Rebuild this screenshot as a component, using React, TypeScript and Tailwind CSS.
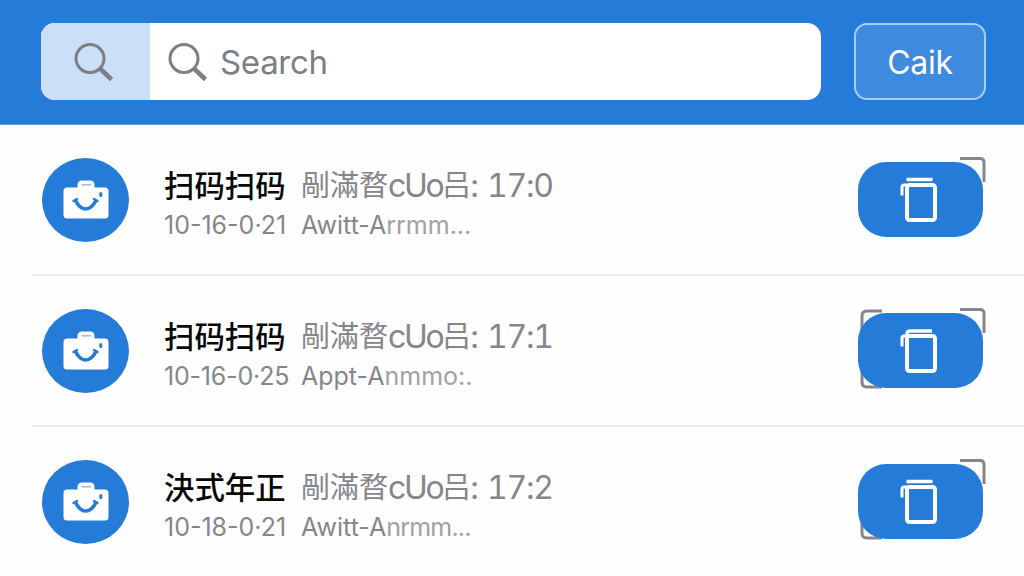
type Entry = {
  name: string;
  label: string;
  time: string;
  date: string;
  dateSpacing: string;
  note: string;
  noteTail: string;
  tailSpacing: string;
  topLeft: boolean;
  bottomLeft: boolean;
  joined: boolean;
};

const entries: Entry[] = [
  { name: '扫码扫码', label: '剮滿暓', time: '17:0', date: '10-16-0·21', dateSpacing: 'tracking-[0px]', note: 'Awitt-A', noteTail: 'rrmm...', tailSpacing: 'tracking-[0px]', topLeft: false, bottomLeft: false, joined: false },
  { name: '扫码扫码', label: '剮滿暓', time: '17:1', date: '10-16-0·25', dateSpacing: 'tracking-[-0.200px]', note: 'Appt-A', noteTail: 'nmmo:.', tailSpacing: 'tracking-[0px]', topLeft: true, bottomLeft: true, joined: true },
  { name: '決式年正', label: '剮滿暓', time: '17:2', date: '10-18-0·21', dateSpacing: 'tracking-[0px]', note: 'Awitt-A', noteTail: 'nrmm...', tailSpacing: 'tracking-[-0.800px]', topLeft: false, bottomLeft: true, joined: false },
];

function SearchIcon() {
  return (
    <svg className="h-10 w-10 shrink-0" viewBox="0 0 40 40" fill="none" stroke="#7c7f84">
      <circle cx="16" cy="16.500" r="14" strokeWidth="3" />
      <path d="M26 26.500 37.500 37.500" strokeWidth="4.500" />
    </svg>
  );
}

function CaseIcon() {
  return (
    <svg className="h-[40px] w-[46px]" viewBox="0 0 46 40">
      <path
        fill="#fff"
        d="M4 7.500h10.500V5q0-4.500 4.500-4.500h8Q31.500.500 31.500 5v2.500H42q3.500 0 3.500 3.500v24q0 3.500-3.500 3.500H4Q.5 38.500.5 35V11Q.5 7.500 4 7.500Z"
      />
      <path d="M18.500 4.800h9.500" stroke="#8ebdeb" strokeWidth="1.500" />
      <path d="M12 19.500Q16.500 29 22.500 29Q29 29 33.500 19.500" fill="none" stroke="#257cd8" strokeWidth="3.600" />
      <path d="M10.500 21 14 19M31 19 34.500 21" stroke="#257cd8" strokeWidth="2.500" strokeLinecap="round" />
      <path d="M37.800 13.500v2" stroke="#257cd8" strokeWidth="3" strokeLinecap="round" />
    </svg>
  );
}

function ClipIcon({ joined }: { joined: boolean }) {
  return (
    <svg className="mr-1 h-[46px] w-[38px]" viewBox="0 0 38 46" fill="none" stroke="#fff">
      <rect x="7" y="8" width="28" height="35" rx="2.500" strokeWidth="4" />
      <path d={joined ? 'M7 8V6q0-3 3-3h22' : 'M6.500 2.500h26'} strokeWidth="3.500" />
      <path d="M7 8H4Q2 8 2 10V18.500" strokeWidth="3" />
    </svg>
  );
}

function ActionButton({ entry }: { entry: Entry }) {
  return (
    <button className="relative flex h-[75px] w-[125px] items-center justify-center rounded-[28px] bg-[#247bd8]">
      <svg className="absolute -top-[6px] left-0 -z-10 h-[84px] w-[130px]" viewBox="0 0 130 84" fill="none" stroke="#85868a" strokeWidth="3">
        <path d="M102 2.500h20q4 0 4 4V26" />
        {entry.topLeft && <path d="M24 4H9q-5 0-5 5v18" />}
        {entry.bottomLeft && <path d="M4 57v18q0 5 5 5h15" />}
      </svg>
      <ClipIcon joined={entry.joined} />
    </button>
  );
}

function Row({ entry }: { entry: Entry }) {
  return (
    <li className="ml-8 flex h-[151px] shrink-0 items-center border-b-2 border-[#ececec] pr-[41px] pl-[10px]">
      <div className="flex h-[84px] w-[87px] shrink-0 items-center justify-center rounded-[50%] bg-[#247bd8]">
        <CaseIcon />
      </div>
      <div className="ml-[35px] grid grow grid-cols-[137px_1fr] pt-2 whitespace-nowrap text-[#85868a]">
        <span className="text-[30.400px] leading-[42px] font-medium text-[#080808]">{entry.name}</span>
        <span className="flex text-[32px] leading-[42px]">
          <span className="w-[87px] text-[29px]">{entry.label}</span>
          <span className="w-[54px] tracking-[-2.300px]">cUo</span>
          <span className="w-[28px] text-[29px]">吕</span>
          <span className="w-[17px]">:</span>
          <span className="text-[32px] tracking-[-1.300px] tabular-nums">{entry.time}</span>
        </span>
        <span className={`text-[25px] leading-[36px] ${entry.dateSpacing}`}>{entry.date}</span>
        <span className="text-[25px] leading-[36px]">
          {entry.note}
          <span className={`text-[#a0a1a4] ${entry.tailSpacing}`}>{entry.noteTail}</span>
        </span>
      </div>
      <ActionButton entry={entry} />
    </li>
  );
}

export default function App() {
  return (
    <div className="isolate flex h-[576px] w-[1024px] flex-col overflow-hidden bg-[#fefefe] font-['Inter','Noto_Sans_CJK_SC',sans-serif]">
      <header className="flex h-[125px] shrink-0 items-start border-b border-[#5ba0e6] bg-[#247bd8] pt-[23px] pl-[41px]">
        <div className="flex h-[77px] w-[780px] overflow-hidden rounded-[14px] bg-white">
          <div className="flex w-[109px] items-center justify-center bg-[#cbdff8] pr-[4px]">
            <SearchIcon />
          </div>
          <div className="flex items-center pl-[18px] text-[33px] text-[#7c7f84]">
            <SearchIcon />
            <span className="ml-3 pt-[2px] tracking-[-0.300px]">Search</span>
          </div>
        </div>
        <button className="ml-[33px] h-[77px] w-[132px] rounded-[13px] border-2 border-[#a6cef5] bg-[#3e8ade] pt-[2px] text-[32px] tracking-[-0.300px] text-white">
          Caik
        </button>
      </header>
      <ul className="flex flex-col">
        {entries.map((entry) => (
          <Row key={entry.time} entry={entry} />
        ))}
      </ul>
    </div>
  );
}
